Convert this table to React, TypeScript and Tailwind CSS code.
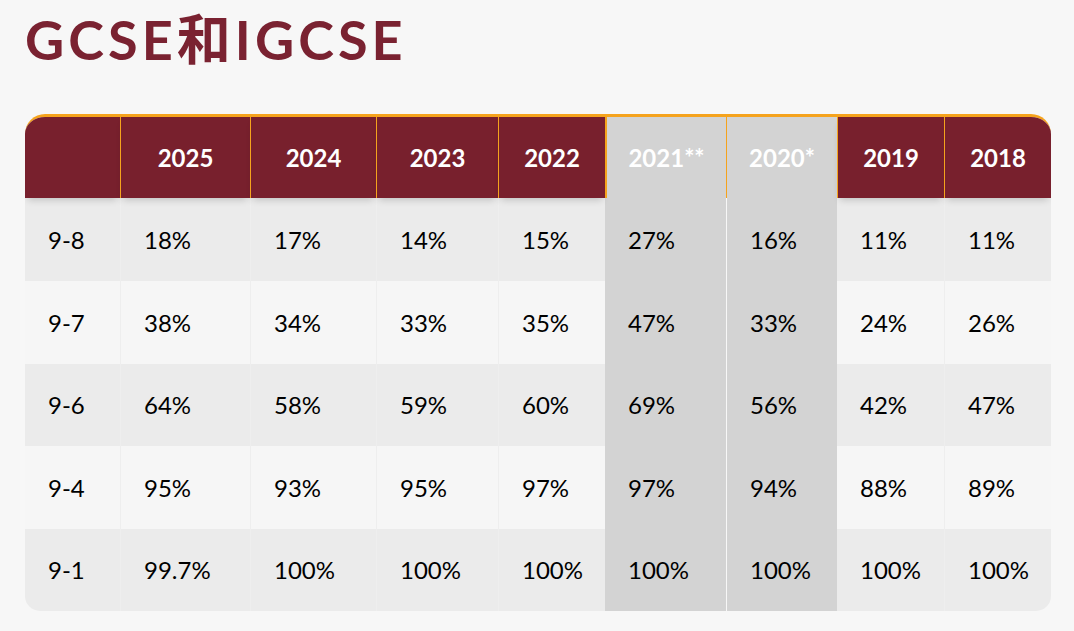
import React from "react";

const cols = [
  { label: "", w: "w-[95px]", gray: false },
  { label: "2025", w: "w-[130px]", gray: false },
  { label: "2024", w: "w-[126px]", gray: false },
  { label: "2023", w: "w-[122px]", gray: false },
  { label: "2022", w: "w-[107px]", gray: false },
  { label: "2021**", w: "w-[121px]", gray: true },
  { label: "2020*", w: "w-[111px]", gray: true },
  { label: "2019", w: "w-[107px]", gray: false },
  { label: "2018", w: "w-[107px]", gray: false },
];

const rows = [
  ["9-8", "18%", "17%", "14%", "15%", "27%", "16%", "11%", "11%"],
  ["9-7", "38%", "34%", "33%", "35%", "47%", "33%", "24%", "26%"],
  ["9-6", "64%", "58%", "59%", "60%", "69%", "56%", "42%", "47%"],
  ["9-4", "95%", "93%", "95%", "97%", "97%", "94%", "88%", "89%"],
  ["9-1", "99.7%", "100%", "100%", "100%", "100%", "100%", "100%", "100%"],
];

const rowH = ["h-[83px]", "h-[83px]", "h-[82px]", "h-[83px]", "h-[82px]"];

export default function App() {
  return (
    <div className="min-h-[631px] w-[1074px] bg-[#f7f7f7] pl-[25px] pt-[13px] font-['Lato',sans-serif]">
      <h1 className="m-0 text-[54px] font-bold leading-none tracking-[0.075em] text-[#7a2231] font-['Lato','Noto_Sans_CJK_SC',sans-serif]">
        GCSE和IGCSE
      </h1>
      <div className="mt-[47px] w-[1026px] overflow-hidden rounded-t-[20px] rounded-b-[15px] border-t-[3px] border-[#f5a31d]">
        <div className="flex">
          {cols.map((c, i) => (
            <div
              key={i}
              className={`${c.w} relative z-10 flex h-[81px] items-center justify-center text-[24px] font-bold text-white ${
                c.gray ? "bg-[#d3d3d3]" : "bg-[#78202d] shadow-[0_5px_7px_-3px_rgba(0,0,0,0.18)]"
              } ${i > 0 ? "border-l border-[#f5a31d]" : ""} ${i === 5 ? "border-l-2" : ""}`}
            >
              {c.label}
            </div>
          ))}
        </div>
        {rows.map((r, ri) => (
          <div key={ri} className="flex">
            {r.map((v, ci) => {
              const c = cols[ci];
              const bg = c.gray ? "bg-[#d3d3d3]" : ri % 2 === 0 ? "bg-[#ebebeb]" : "bg-[#f6f6f6]";
              const border =
                ci === 6
                  ? "border-l border-[#f7f7f7]"
                  : ci > 0 && ci !== 5 && ci !== 7
                  ? "border-l border-[#eeeeee]"
                  : "";
              return (
                <div
                  key={ci}
                  className={`${c.w} ${rowH[ri]} ${bg} ${border} flex items-center pl-[23px] text-[24px] text-black`}
                >
                  {v}
                </div>
              );
            })}
          </div>
        ))}
      </div>
    </div>
  );
}
